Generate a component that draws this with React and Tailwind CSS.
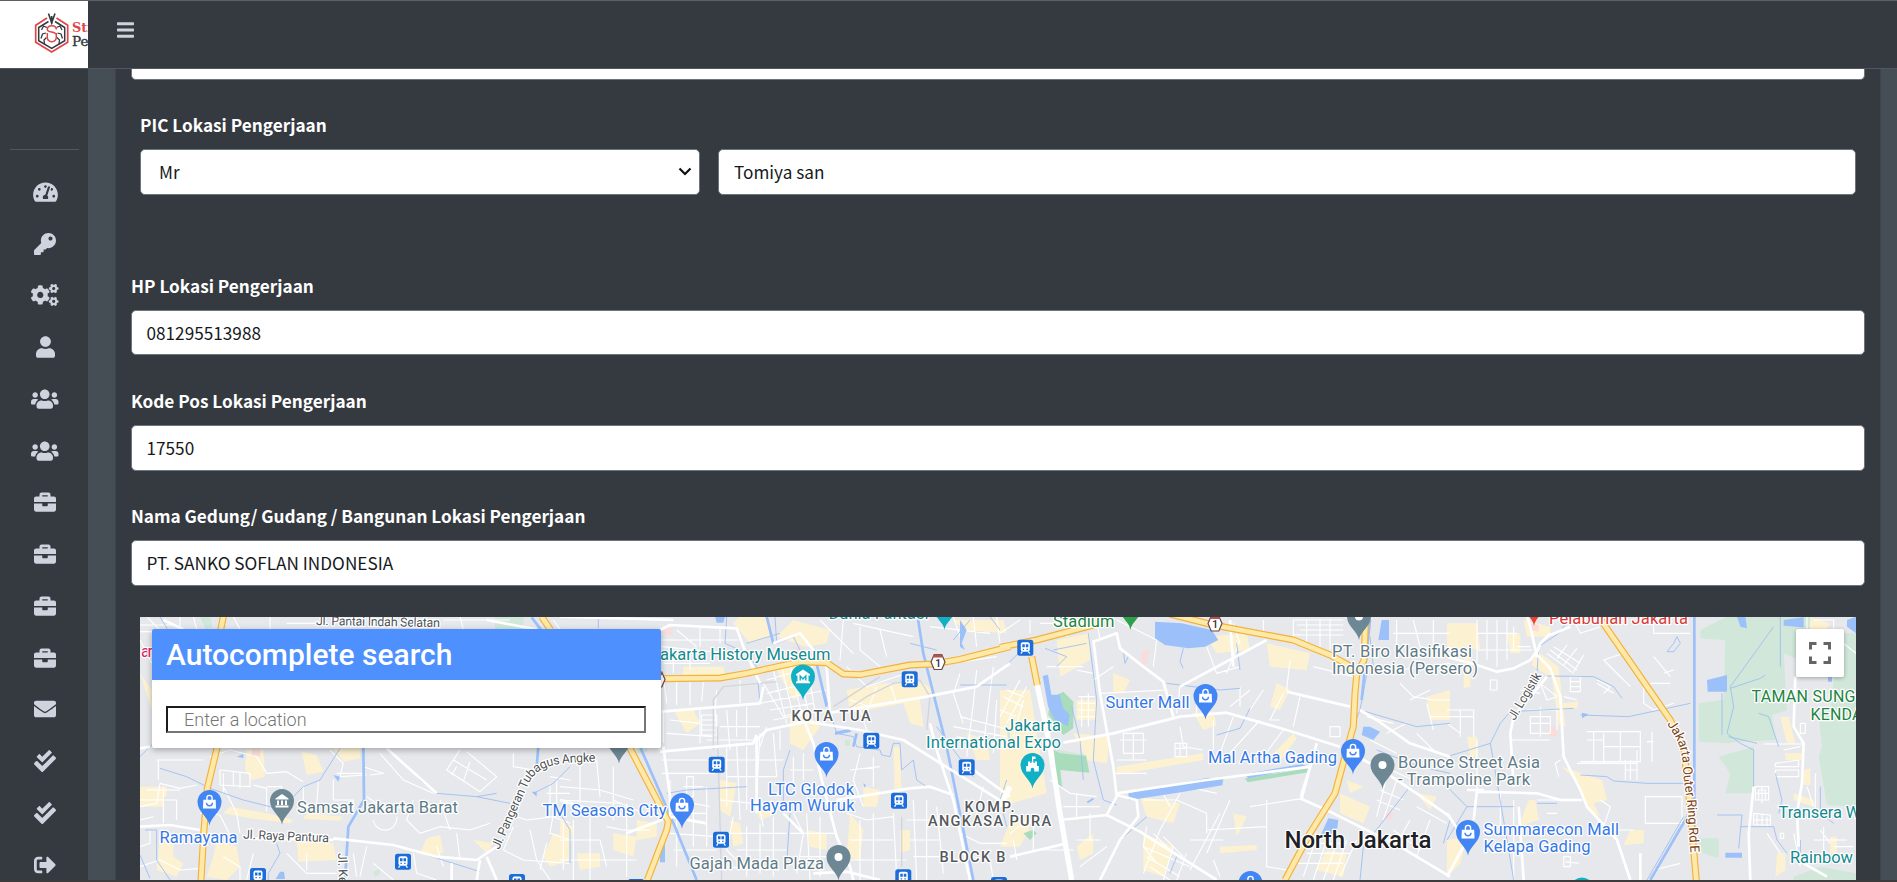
import React from "react";
import {
  FaTachometerAlt, FaKey, FaCogs, FaUser, FaUsers, FaBriefcase,
  FaEnvelope, FaCheckDouble, FaSignOutAlt, FaBars,
} from "react-icons/fa";

const UI = "font-['Noto_Sans_CJK_JP','Noto_Sans_CJK_SC','Noto_Sans',sans-serif]";

const NAV = [
  [FaTachometerAlt, "w-[25px]"], [FaKey, "w-[22px]"], [FaCogs, "w-[27.5px]"], [FaUser, "w-[19px]"],
  [FaUsers, "w-[27.5px]"], [FaUsers, "w-[27.5px]"], [FaBriefcase, "w-[22px]"], [FaBriefcase, "w-[22px]"],
  [FaBriefcase, "w-[22px]"], [FaBriefcase, "w-[22px]"], [FaEnvelope, "w-[22px]"], [FaCheckDouble, "w-[22px]"],
  [FaCheckDouble, "w-[22px]"], [FaSignOutAlt, "w-[22px]"],
];

/* Map geometry. Each tile is drawn at three units per pixel from its own left edge. */
const TILES = [
  {
    ox: 120,
    sand: "M60 560h70v60h-70zM120 700l40 10 0 60 30 20-20 40-60-20zM290 720l60 20 10 60-40 40-60-10 20-60zM380 450h50l5 80-40 10-20-30zM545 455l45 10 20 50-50 10zM530 725l110 5 10 50-115 5zM640 445h80v30l-50 10zM330 620l110 20 80 20-10 10-120-15-80-15zM920 715l40-10 10 50-30 20-40-15zM1060 720l60 10-20 30zM1300 700l50 10v70l-60 20-20-30zM90 560h50v30h-50zM60 220l35 50v60zM560 640l110 10-10 12-110-5z",
    green: "M240 50h30l8 30-20 8zM1125 50h85v40h-85zM760 815l20-8v15l-15 10z",
    pink: "M395 445h25v25h-25z",
    lake: "M350 470l20-8 0 12zM480 815h12l3 22-28 0zM1235 575h15v15zM640 525l20 5-5 15z",
    water: "M120 505L200 530 270 565 370 600 470 625M660 445L600 540 550 560 520 590 480 650M60 470L100 430M75 690L110 690 110 780 150 840M470 730l10 30-35 60 0 20M820 460L900 540 950 580 1070 590 1130 580M1070 590L1170 610M60 765l30 70M920 765L1080 815M1350 500l-50 50-60 30M60 50l60 0 30 50",
    canal: "M730 440L732 600 685 680 675 840M1255 440L1250 500M1235 52l30 40",
    minor: "M60 620l50-10 10-60 60 15 50-10M110 480h140M115 480v60M300 510l90 10v40l-90-5zM310 520v60M340 512v45M360 515v50M60 600h110v60M80 570h100M130 560v110M310 560l40 80 10 60M400 555l40 10v70M440 560h45v60M550 560v60l40-5 5-70M640 540v60h60v60M650 520h80M60 660l40-10M90 690v40l-30 10M270 470l60-20 80 20 30 50 60-5 50 30M240 640l60 5 30 60M630 450l40 40-10 40 80-5M730 500l60 20-40 5M780 460L850 540 940 580M740 590l60 40 60-10M760 660a35 35 0 0 0 70-10M880 600l-20 60 40 40 60-20 90 10 60-20M960 600l30 90M1020 450L980 510 1080 575 1130 530 1040 455M1000 480l100 60M1010 500l-15 25M1050 485l-20 60M1180 460v40l60 10M1290 530l60 10M1280 580h70M1290 550v80M1310 540v90M1160 640l60 20 80-10 50 20M1230 690l20 90 40 60M1180 680l-30 70 60 30 140 10M1300 640l-10 60 60 20M1330 660v150M1280 730l-20 80M60 800l60-20 60 30 60-5M310 770l50 30 0 40M400 760l-20 80M500 760l60 60 90 0M560 760v50M700 760l10 70M740 740l-20 90M760 790l60 50M880 760l10 60 60 20M950 740l20 60M1010 700l10 80M60 120L95 190M80 50l70 70M180 50v38M220 50l10 38M340 50l20 38M450 50v38M500 70h90M970 60h200M1020 50l10 38M1300 60l20 28M60 75h100M60 95h180",
    road: "M60 680L150 675 240 690M640 715L820 735 950 770 1070 780 1130 740M1100 770L1130 840M995 790V840M60 445L90 440M130 60L190 88M800 445L950 580M380 715L640 720M1100 60L1250 88M1070 840L1080 780",
    highway: "M310 50L302 90M292 440L262 565 252 690 243 840M1265 50L1292 90",
  },
  {
    ox: 560,
    sand: "M540 50h80l10 60-60 20-50-60zM700 60l110 30-10 40-60 10-90-30zM860 270l110-20 120 0 30 20-40 30 10 80-40-10-20-60-160 30zM690 350l40-20 50 50-50 70-40-20zM650 210l80-30 30 80-60 40zM1000 440h20l5 150-20 0zM910 560l50 10-10 50-40 0zM340 330h60l20 40-40 30zM370 200h120l10 40-130 0zM480 540l50 10-20 100-30-20zM580 600l60 10 10 30-50 20zM230 660l60 10 0 40-60 10zM160 700l70 10-10 60-60-20zM510 660l30 10 10 60-30 10zM1180 60l150 0 10 40-130-10zM870 640l40 50-10 90-40-10zM1020 690l30 0 0 60-30 10zM1220 400l60 20 10 60-40 0zM740 690l60 10 0 50-50-10zM0 660l40 20-10 60-30 0zM50 760l70 0 0 40-60 10z",
    green: "M232 445l30-5 0 15-30 5zM855 420h15v18h-15zM1340 380l10 20v60z",
    pink: "M305 80l30 5v20l-30-5zM700 140l30 5v30l-30-5z",
    lake: "M465 50h30l-5 18-20 0zM825 395l40-8 10 8-50 10zM300 730l15-3v60l-15 0zM910 550l8 5-5 8zM1200 60l20 30-15 40 10 20-15-10 0-40z",
    water: "M645 50L650 130 700 110 720 150M500 50L495 130 560 160 590 200 600 310M770 200L830 400 880 410 890 440 960 450 965 465 990 470 1000 430 1020 430 1025 510 1060 480 1070 540 1100 560M1130 150l-80-20M115 50v35M320 580L380 570 560 560M690 640L680 790M1130 380L1240 530M1200 255h140M690 450l-20 60 0 120M1340 540l-20 60 20 80M1230 60l-50 60M1290 50l30 40M0 640l30 50 0 100M660 100l-100 30",
    canal: "M1073 50L1090 160 1160 440 1200 640 1240 840M620 50l20 80M770 190L800 320M240 440L345 680 410 840M890 400l-10 40",
    minor: "M305 120h230M305 140l200 20M350 90l60 50M420 80v60M480 80v50M310 340v90M420 330v100M470 270l-5 60 10 120M330 360l90 10M425 345h45v60h-45zM425 360h45M425 375h45M425 390h45M500 330l10 120M530 330v80M560 320v100M480 380h120M440 420h160M610 250l60 100 60-20M620 280l120-30M600 310l200-40M640 210l40 160M665 200l40 170M690 195l40 170M715 190l35 170M740 190l30 170M620 240l140-40M630 330l130-20M640 360l160-30M305 520h160M305 480h150M330 540v120M380 530h20v60h-20zM370 560h60M350 600l100 20M400 620v120M440 560v180M500 440v180M530 430l10 230M560 440v190M600 400l-10 180 20 100M640 400l10 130M490 480h180M500 530h150M480 600l100 10M520 650l-20 100 60 60M500 700h180M530 750h150M560 680v150M600 670v150M640 650v180M700 640l30 60-20 120M480 800l180 10M690 700h140M740 640l10 200M780 650v180M720 770h110M860 200l60 60 120-40M950 260l-30 80M990 250l20 60M900 330l20 60M870 300l60 20 50-10M900 80v70l60 50M960 90l20 80M850 60l-10 120M780 60l100 100M880 70l180 40M1110 80l180 20M1180 50l20 60M1240 50l10 90M1310 50l10 80M1110 200l200-30M1200 220l-20 60 30 90M1250 210l-10 100M1300 200l-30 240M1180 380l160 30M1200 350l150 40M1190 410l150 30M1240 310l-20 160M1310 300l-10 160M900 460l-20 80 30 80M940 470v90M870 510l90-10M860 640l60 20 80-10M900 660v180M940 640v190M870 720h130M860 780h180M1000 640l10 190M1060 600l10 240M1100 600v240M1040 660h140M1050 720h90M1060 770h100M1130 620l20 200M0 560l120 10 100 30M60 470v140M110 480l10 110M160 500v160M0 600l180 10M0 720h120l20 80M160 600l90 40M40 660v180M90 650v190M140 680l50 10 80 0M0 780h230M200 610v220M1200 700l60 30 80 0M1270 560l-20 80M1290 780l10 60M1200 760l80 20M320 400l140 10M310 640h130M350 660v140M330 700l140 10M340 750h130M310 230l10 80M350 245v70M390 245v70M430 245l-5 60M540 240v70M310 190h140M340 160v60M390 150v60M620 380l-20 60M660 390v60M600 480h70M700 470v90M730 460v80M690 510h70",
    gray: "M460 450V300L490 260 650 245M860 330L920 290 1000 250 1080 240M820 320L960 230M1080 240L1110 290 1100 390M472 380L485 840M1025 650V800",
    road: "M300 90L330 75 530 85 550 140 600 250M305 335L600 310 610 260M590 420L620 390 740 365 900 390 1030 420 1350 620M300 455L580 430 590 405M310 440L330 590 330 660M720 330L760 430 790 560 830 710 870 800 880 840M800 340L1100 290 1250 260 1350 190M1110 370L1130 450 1180 600 1230 840M830 600L1050 565 1110 560 1180 585M0 50L340 60M640 130l80-30 80 100 10 140M440 670L330 650 200 700M760 820L860 815 960 840M1200 480L1350 590M590 420V640M0 600L130 640M670 640l60 60",
    highway: "M300 236L480 234 560 220 720 185 800 188 850 222 900 224 1050 195 1120 192 1200 178 1350 140M210 445L325 665 320 690 262 840",
  },
  {
    ox: 1000,
    sand: "M0 270l90 0 50 310-140 40zM170 120l100-20 0 80-90 50zM620 110l120-10 10 50-100 10zM800 130l130 30-10 50-110-10zM220 400l110 10-10 80-60-10zM350 500l260-40 0 20-260 45zM830 250l40 20-30 60-30-10zM880 400l-80 80 40 5 50-70zM420 590l120 20-20 60-80-20zM1020 580l90 40-20 50-70-30zM1280 290l70-20v90l-60 0zM980 750l60 10-10 70-80-20zM430 700l90 40-30 90-60-20zM660 740l110-5v15l-110 10zM580 340l60-5 10 40-40 15zM700 640l40 10-30 60zM1250 580l60 10-20 40zM230 300h60v60h-60zM40 640l60 20-40 80-60 0zM340 220l50 20-20 40-30 0zM230 740l50-40 0 60-40 20zM1040 540l50 20-40 20z",
    green: "M170 450l8 0 80 15 10 50-85-10 5 60-18-20z",
    park: "M150 295l40-20 30 30 0 80-30 20-45-60zM162 450l18 10 78 8 10 50-88-8 6 55-18-20zM735 535l190-30-2 12-180 30zM70 700l30-10 10 10-20 20z",
    pink: "M425 155l25-8-8 40-18 15zM1150 640l30 0 0 15-25 5z",
    lake: "M465 65l80 5 90 20 20 30-40 20-50 5-70-10-30-20zM128 228l16-4 10 60 25 0 10 40 20 20-5 35-40-20-20-40zM385 580l160-32 80-15 45 5-3 18-120 20-160 25zM735 522l170-30 20 8-180 35zM1145 60h22v60h-32zM985 655l30 5-5 40-50 10zM1090 380l20 0 30 15-20 25-35-15zM260 605l20-12 2 5-18 12z",
    water: "M265 100L290 300 280 480 310 600 350 615M215 320L240 420 250 540M135 145L200 170 170 200M550 145l-10 40 10 20M1080 330L1250 380 1350 370M1100 225L1080 330 1040 430M500 250l160 20 60-5M650 405l70-20 30-60M370 150l15 20-10 20zM360 720L440 650M530 770l-20 50M1230 560L1090 740 1080 840M1130 450L1260 500 1350 520M1110 110L1120 200M1350 660l-20 70M710 130l10 80M0 215l70-70M160 150l100-20",
    canal: "M1110 60L1085 300",
    minor: "M140 200h110M280 240l60-40M300 280l200-10M350 60l120 60M470 120l-10 80M620 140l30 80 70-20M720 120l-40 100M700 70l20 60M790 60v50M880 60v60M900 130l60 20M960 60v80M880 60h150M890 75h140M900 90h130M880 105h150M920 60v70M990 60v90M870 180l-10 90M940 200l120 30M540 260l-10 80M590 270v80M750 270l-60 50M790 270l-40 60M850 280l-40 80 30 0M900 290l-20 90M720 260v60M540 380l10 60 60 10M640 360v90M700 350l-40 110M780 360l-100 110M850 390l-60 80M525 430h35v40h-35zM525 445h35M540 430v40M370 400h60v60h-60zM360 420h80M400 400v80M350 480h90M340 520h100M950 430l-50 160M750 620l160-25M660 640l-90 170M800 600v200l60 10M560 560l90 20M480 560l30 60M430 600l100 0 90 40M540 580l-60 110M620 690l180-10M570 720l100 0M620 640v60M690 600l-70 160M230 580v80M150 540l60 40 80 10M190 620h110M230 720h70M270 640v80M30 700l40-30 80 0M40 720l10 60M100 660v90M130 750h90M240 800l80-60M440 680l-10 60 40 50M460 700l60 60M490 710l60 60M430 740l140 60M520 740l-30 100M560 760l-30 80M640 780l20 50M900 730h140M920 760h130M890 790h140M950 710l-40 120M980 720l-40 120M1010 730l-40 110M1040 720l-40 120M1070 720l-50 110M1110 420l80 40M1150 500l90 40M1160 530l-30 120M1190 540l-40 120M1140 570l70 30M1130 600l70 30M1230 300l60-30M1280 310l20 80M1300 300h50M1290 350h60M1160 400l60-30M1100 350l80 20M1240 60l20 80 90 20M1190 60v80M1300 60v90M1180 100h170M1200 210l150-20M1250 400l60 60M1200 250l40 40 60 10M0 350l60-110M20 370l60-110M10 290l60 30M20 270l50 20M0 330l50 20M40 410l30-110M0 100l60-40M90 60v40M120 70h160M200 60v50M290 60l10 60M230 210l50 10M235 310h50M235 330h50M235 350h50M235 290h50M245 290v90M265 280v100M990 380h30v30h-30zM1250 620l90 50M1180 690l80 60M1230 660l-50 90M1290 660l-40 110M440 770l100 60M450 800l60 40M480 690l-50 130",
    road: "M280 120L300 280 340 500 350 590M280 125L350 100 360 145 430 200 490 245 520 350M190 428L340 400 540 350 680 338 860 390 1020 440M350 580L620 540 930 500M350 590L320 645 180 660M320 645L420 695 650 840M30 770L200 730M350 585L410 600 415 650 360 720 300 840M900 595L1000 640 1200 740 1350 830M905 595L950 430M1070 470L1130 500 1250 580 1350 650M1080 330L1130 360 1230 430M540 260L800 120M860 275L1050 320M700 200L690 60M1230 430l120 40",
    artery: "M110 250L130 340 150 440 180 640 215 840M0 620L30 560",
    highway: "M0 142L110 120 280 75M95 170L112 255M510 42L640 75 880 120 990 165 1045 195 1070 225 1065 280 1060 380 1035 470 1005 580 930 700 855 840M1070 225L1092 180 1097 50",
  },
  {
    ox: 1447,
    sand: "M0 70h90l10 80-50-10-50 10zM50 160h20v100l-20 5zM230 60l80 20 0 30-70 0zM265 150l70 50 20 180-20-5-20-140-60-40zM345 310l50-5-5 20-45 5zM345 500l120 40 15 60-40 10 20 40-40-20-25-80zM245 600l20 0 10 60-60 20zM550 690l40 0 0 40-60 5zM0 720l60-10-20 80-40 40zM1080 50l70 20-20 30-50-10zM1000 350h25l20 80-25 0zM1015 460h50v20h-50zM1070 510l20-5 0 50-20 0zM1040 580l60 20 0 20-60-20zM990 760l25 0 0 50-30 20zM1150 710l20 0 0 50-20 0zM180 100l40 0 0 60-30 0zM60 410l30 0 0 60-20 0z",
    green: "M760 90L840 50 1090 50 1080 190 1010 160 1020 330 975 345 985 420 870 425 845 430 755 425 755 310 830 300 835 120 760 115zM815 470L920 440 920 580 835 580 850 520zM1130 330L1227 320V620L1140 615 1115 470 1125 440 1115 350zM755 715h60l0 60-60-20zM1040 830l80-30 107 20v20h-187zM1180 100l47 0v240h-80z",
    pink: "M305 380h25v30h-25zM250 70l25 5v20l-25-5z",
    lake: "M780 240l60-15v50l-58 0zM870 50h25l5 35-20-5zM1010 60l60-8v30l-60-5zM835 758h50v15h-50zM405 338l20 5-20 12zM1143 230h12v15h-12zM1200 60l27-10v50l-27-20z",
    water: "M0 470L130 430 160 370 190 335 380 325M270 220l5-80 60-40 30-40M300 228L440 230 500 260 525 295M400 345L545 350 730 310M400 525L480 530 500 543 600 550 740 550M0 560L60 620 200 620M130 430L180 720 200 840M270 610h60M690 110l10 20-20 25-20 0 20-25zM980 80L850 260 860 320 840 400 880 430 920 450 920 580M850 265l90-30 15-10M825 280V405M935 340l30 10 30 90M845 410L930 430M1000 50v150M810 645h75l-10 100M880 680h100l10 40 30 40M985 520l20 80-10 40M1120 560v80l40 30M1060 720l0 40 40 30M60 620L0 720M710 650L600 840",
    canal: "M742 50V770M735 625L610 840",
    minor: "M90 60v130M120 60v120M150 60v140M180 60v120M90 100h120M90 150h120M200 80v70M210 140h40M205 150h50M130 240h20v30h-20zM280 250l50 40-30 10zM240 330h90v60M250 350h60v50h-60zM280 320v90M250 370h60M220 270l60 10M300 160l80 60M310 150l80 60M320 140l80 50M330 175l30-40M350 195l40-50M380 215l30-50M370 230h30v45h-30zM370 245h30M370 260h30M450 240l40 20-20 20M450 250l50 30M350 290l40 10M380 60l20 40 60-20M530 160l-60 20 80 80M420 395h160v90h-180M440 395v90M470 400v90M520 395v90M580 395v90M470 440h110M420 420h50M535 480v60M550 480v60M535 510h35M570 450v90M615 395v90M600 425h20M390 490l30 0 150 0M620 170l50 60M650 220l30-10M590 250v60l30 20 60-20M610 250h60M620 60v40h110M595 590h110v80h-110zM200 600v240M160 580l0 100M270 600h100M300 640l30 0M350 770h20v30h-20zM355 785l40 5M0 330h80v80M0 350h80M40 330v80M0 370l40 30M90 420v160M60 480l60 20M190 420h120M340 480l-15 10 10 40M460 600l30 20-20 60M500 690l60 0M620 810l80-20M1060 370h15v30h-15zM1010 450l50-10M950 432h120M985 490l70-10v20l-70 0zM985 510l70 0v20h-70zM925 560h40v40h-40zM935 570h20v30h-20zM945 560v50M925 580h40M920 640l50 5v30h-50zM930 645v30M945 645v30M960 650v30M920 660h50M1080 560l20 60M1105 520v130M1000 700h10v15h-10zM1120 690l30 40M1100 720h100M1130 680v80M1160 740h60M1040 700l20 100M960 700l40 60M1130 100l40 0M1100 60h60v30M1190 130l37 30M1080 50v40",
    road: "M0 170L90 195 150 215 200 205 250 180 265 160 310 205 340 290 350 470 400 570 420 620 510 720 550 840M310 100L280 130 265 170M370 80l-60 25M270 170L250 80 240 50M300 230L200 350 190 400 200 560M90 575L270 580 340 600 405 600M90 570L80 660M0 640L40 700M60 720L0 830M1045 230L1040 380 1070 430 1065 550 1050 640 1055 740M920 560L905 700 910 840M580 760V840M1070 790L1140 830M215 620L230 840M60 570h50",
    highway: "M455 50L670 360 710 440 725 580 740 750 748 840",
  },
];

const LAYERS = [
  ["sand", { fill: "#fcf2d2" }],
  ["green", { fill: "#d0e7da" }],
  ["park", { fill: "#a9dcba" }],
  ["pink", { fill: "#fadcdc" }],
  ["minor", { fill: "none", stroke: "#fff", strokeWidth: 3.4, strokeLinejoin: "round" }],
  ["gray", { fill: "none", stroke: "#d3d5da", strokeWidth: 4 }],
  ["lake", { fill: "#9cc0f9" }],
  ["water", { fill: "none", stroke: "#9dbdf2", strokeWidth: 2.6, strokeLinejoin: "round" }],
  ["canal", { fill: "none", stroke: "#9cc0f9", strokeWidth: 8, strokeLinejoin: "round" }],
  ["road", { fill: "none", stroke: "#fff", strokeWidth: 8, strokeLinejoin: "round" }],
  ["artery", { fill: "none", stroke: "#fff", strokeWidth: 16, strokeLinejoin: "round" }],
  ["highway", { fill: "none", stroke: "#f3b23c", strokeWidth: 21, strokeLinejoin: "round" }],
  ["highway", { fill: "none", stroke: "#ffe9a8", strokeWidth: 14, strokeLinejoin: "round" }],
];

const BLUE = "#3578e5", GREY = "#5f7b87", TEAL = "#148a8f", DARK = "#55585c", GREEN = "#1c8540";

/* text, x, baseline, width, colour, size, weight */
const LABELS = [
  ["ar", 141, 657, 12, "#d8275f", 16, 400],
  ["Samsat Jakarta Barat", 297, 812.5, 161, GREY, 16.5, 400],
  ["Ramayana", 159.5, 842.5, 78, BLUE, 16.5, 400],
  ["TM Seasons City", 542.5, 816, 124, BLUE, 16.5, 400],
  ["akarta History Museum", 660, 660, 170.5, TEAL, 16.5, 400],
  ["Dunia Fantasi", 828.5, 619, 100, TEAL, 16.5, 400],
  ["KOTA TUA", 791.5, 720.5, 79, DARK, 14.5, 500],
  ["Jakarta", 1005, 731, 56, TEAL, 16.5, 400],
  ["International Expo", 926, 748, 135, TEAL, 16.5, 400],
  ["LTC Glodok", 768, 794.5, 86, BLUE, 16.5, 400],
  ["Hayam Wuruk", 750, 811, 104.5, BLUE, 16.5, 400],
  ["KOMP.", 964.5, 811.5, 50, DARK, 14.5, 500],
  ["ANGKASA PURA", 928, 826, 123, DARK, 14.5, 500],
  ["BLOCK B", 939.5, 862, 66, DARK, 14.5, 500],
  ["Gajah Mada Plaza", 689.5, 869, 134.5, GREY, 16.5, 400],
  ["Stadium", 1053, 627, 61.5, GREEN, 16.5, 400],
  ["Sunter Mall", 1105.5, 708, 84, BLUE, 16.5, 400],
  ["Mal Artha Gading", 1208, 763, 129, BLUE, 16.5, 400],
  ["PT. Biro Klasifikasi", 1332, 657, 140, GREY, 16.5, 400],
  ["Indonesia (Persero)", 1332, 674, 146, GREY, 16.5, 400],
  ["Bounce Street Asia", 1398, 768, 142, GREY, 16.5, 400],
  ["- Trampoline Park", 1398, 785, 132, GREY, 16.5, 400],
  ["North Jakarta", 1284.5, 848, 147, "#202124", 24, 500],
  ["Pelabuhan Jakarta", 1549, 623.5, 139, "#d93a3a", 16.5, 400],
  ["TAMAN SUNG", 1751.5, 702, 104, GREEN, 16, 400],
  ["KENDA", 1810.5, 719.5, 52, GREEN, 16, 400],
  ["Transera W", 1778.5, 818, 82, TEAL, 16.5, 400],
  ["Rainbow", 1790, 863, 63, TEAL, 16.5, 400],
  ["Summarecon Mall", 1483.5, 835, 135.5, BLUE, 16.5, 400],
  ["Kelapa Gading", 1483.5, 852, 107, BLUE, 16.5, 400],
];

/* circle centre x, y, colour, glyph */
const PINS = [
  [209.5, 802, "#4286f5", "bag"], [282, 801, "#6d8894", "bank"], [619, 740, "#6d8894", "dot"],
  [682, 805, "#4286f5", "bag"], [803, 676.5, "#12b0c4", "museum"], [826.5, 754, "#4286f5", "bag"],
  [838.5, 857, "#6d8894", "dot"], [1032.5, 765, "#12b0c4", "castle"], [1205.5, 696, "#4286f5", "bag"],
  [1353, 751, "#4286f5", "bag"], [1359, 616.5, "#6d8894", "dot"], [1382.5, 765, "#6d8894", "dot"],
  [1468, 832, "#4286f5", "bag"], [1250.5, 883, "#4286f5", "bag"], [944.5, 606.5, "#12b0c4", "dot"],
  [1130.5, 606.5, "#2da04c", "dot"], [1534, 602.5, "#ea4335", "dot"], [1582, 889.5, "#12b0c4", "dot"],
];

const STATIONS = [
  [403, 861.7], [258, 876], [517, 882], [716.7, 764.7], [721, 839.7], [871.3, 740.7], [909.7, 679.3],
  [966.7, 767.3], [899, 800.7], [903.3, 877.3], [999, 885], [636, 887], [1025.3, 647.7],
];

function Glyph({ kind }) {
  if (kind === "bag")
    return (
      <>
        <path d="M-6.2-2.2h12.4l.3 8.700h-13z" fill="#fff" />
        <path d="M-2.6-2v-2a2.600 2.600 0 0 1 5.200 0V-2" fill="none" stroke="#fff" strokeWidth="1.4" />
        <path d="M-3 .8a3 3 0 0 0 6 0" fill="none" stroke="#4286f5" strokeWidth="1.4" />
      </>
    );
  if (kind === "bank")
    return <path d="M-6.500-2.500L0-7l6.500 4.500v1h-13zM-5-0.500h2v4.500h-2zM-1-0.500h2v4.500h-2zM3-0.500h2v4.500h-2zM-6.500 4.500h13v2h-13z" fill="#fff" />;
  if (kind === "museum")
    return (
      <>
        <path d="M-7-2.300L0-7 7-2.300v1.300h-14zM-5.500-1.500h11V5h-11zM-7 5h14v1.800h-14z" fill="#fff" />
        <path d="M-2.800 4V-0.500L0 2.500 2.800-0.500V4" fill="none" stroke="#12b0c4" strokeWidth="1.400" />
      </>
    );
  if (kind === "castle")
    return (
      <>
        <path d="M-4.500-3.500h2.200v1.500h1.300v-1.500h2v1.500h1.300v-1.500h2.200v4.500h1.800v5.500h-4.500V4.500a1.800 1.800 0 0 0-3.600 0v2h-4.500V1h1.800z" fill="#fff" />
        <path d="M-.5-3.500V-8.500H3v2.500H.8v2.500z" fill="#fff" />
      </>
    );
  return <circle r="4" fill="#fff" />;
}

function Shield({ x, y }) {
  return (
    <g transform={`translate(${x} ${y})`}>
      <path d="M-3.800-7.500h7.600L7 0 3.800 7.500h-7.600L-7 0z" fill="#fff" stroke="#6b4a48" strokeWidth="1.200" />
      <path d="M-3.800-7.500h7.600l1.200 3h-10z" fill="#b5544d" />
      <text y="4.500" textAnchor="middle" fontSize="11" fontWeight="500" fill="#333">1</text>
    </g>
  );
}

function CityMap() {
  const halo = { paintOrder: "stroke", stroke: "#fff", strokeWidth: 2.6, strokeLinejoin: "round" };
  return (
    <svg viewBox="140 617 1716 263" className="block h-[263px] w-[1716px] font-['Roboto',sans-serif]">
      <rect x="140" y="617" width="1716" height="263" fill="#e6e8ec" />
      {LAYERS.map(([key, style], i) =>
        TILES.filter((t) => t[key]).map((t) => (
          <path key={`${i}-${t.ox}`} d={t[key]} transform={`translate(${t.ox} 600) scale(0.33333)`} {...style} />
        ))
      )}
      <Shield x={938} y={662} />
      <Shield x={1215} y={623.500} />
      <Shield x={658} y={679.500} />
      {STATIONS.map(([x, y]) => (
        <g key={`${x}-${y}`} transform={`translate(${x} ${y})`}>
          <rect x="-8" y="-8" width="16" height="16" rx="2.500" fill="#1a6ddb" />
          <rect x="-4.500" y="-5.500" width="9" height="9.500" rx="2" fill="#fff" />
          <path d="M-3-3.500h2.500v3H-3zM.5-3.500H3v3H.5z" fill="#1a6ddb" />
          <path d="M-2.500 1h1.300v1.300h-1.300zM1.200 1h1.300v1.300H1.200z" fill="#1a6ddb" />
          <path d="M-3 4l-1.500 2M3 4l1.500 2" stroke="#fff" strokeWidth="1.200" />
        </g>
      ))}
      {PINS.map(([x, y, c, k]) => (
        <g key={`${x}-${y}`} transform={`translate(${x} ${y})`}>
          <path d="M0 23.500C-1 15-12 10-12 0a12 12 0 0 1 24 0C12 10 1 15 0 23.500z" fill={c} />
          <Glyph kind={k} />
        </g>
      ))}
      {LABELS.map(([s, x, y, w, c, size, weight]) => (
        <text key={s + x} x={x} y={y} textLength={w} fontSize={size} fontWeight={weight} fill={c} {...halo}>{s}</text>
      ))}
      <defs>
        <path id="angke" d="M499 850L528 785Q535 769 554 765T608 762" />
        <path id="ring" d="M1667 724Q1682 744 1683 765T1687 800L1691 860" />
      </defs>
      <g fill="#505357" fontSize="12.500" {...halo}>
        <text x="316" y="626" textLength="124" transform="rotate(1 378 625)">Jl. Pantai Indah Selatan</text>
        <text x="243" y="838.500" textLength="86" transform="rotate(2.500 243 838)">Jl. Raya Pantura</text>
        <text x="0" y="0" transform="translate(338 853) rotate(88)">Jl. Ke</text>
        <text x="0" y="0" textLength="53" transform="translate(1514.500 721) rotate(-59)">Jl. Logistik</text>
        <text><textPath href="#angke" textLength="147">Jl. Pangeran Tubagus Angke</textPath></text>
        <text fill="#7d3f13" fontSize="13"><textPath href="#ring" textLength="133">Jakarta Outer Ring Rd E</textPath></text>
      </g>
    </svg>
  );
}

function Logo() {
  return (
    <svg viewBox="0 0 88 67" className="h-[67px] w-[88px] shrink-0">
      <g fill="none" strokeLinejoin="miter">
        <path d="M47 17L35.700 24.300v17L51.700 51l16-9.700v-17L56.500 17" stroke="#e0454a" strokeWidth="1.700" />
        <path d="M48.500 20.500L38.700 26.500v13.200L51.700 47.300l13-7.600V26.500L55 20.500" stroke="#343a40" strokeWidth="1.500" />
        <path d="M48.500 12.500l3.200 9.500 3.300-9.500M51.700 15v8" stroke="#343a40" strokeWidth="1.600" />
        <path d="M47 26.500l-3.500-1.500-2 4M56.500 26.500l3.500-1.500 2 4M46 32l-3.500 1-1.500 4.500M57.500 32l3.500 1 1.500 4.500M46.500 36.500l-2.500 2.500.5 4M57 36.500l2.500 2.500-.5 4" stroke="#343a40" strokeWidth="1.300" />
        <path d="M56.300 28.500c0-5-9-5-9 0 0 3.500 9 1.500 9 5.500M47.300 32v4.500c.5 5.500 8.500 5.500 9 0v-4.500" stroke="#e0454a" strokeWidth="1.500" />
      </g>
      <text x="72" y="31" fontFamily="DejaVu Serif, serif" fontWeight="700" fontSize="13" textLength="22" lengthAdjust="spacingAndGlyphs" fill="#e0454a">Str</text>
      <text x="72" y="44.500" fontFamily="DejaVu Serif, serif" fontSize="13.500" fill="#343a40" stroke="#343a40" strokeWidth=".4">Pe</text>
    </svg>
  );
}

const Label = ({ children, className = "" }) => (
  <div className={`flex h-7 items-center pb-[2px] text-[17.2px] leading-none font-bold whitespace-nowrap text-white ${className}`}>{children}</div>
);

const Field = ({ children, className = "" }) => (
  <div className={`flex items-center rounded-[5px] border border-[#6c757d] bg-white text-[17.2px] leading-none whitespace-nowrap text-[#16191c] ${className}`}>
    <span>{children}</span>
  </div>
);

export default function App() {
  return (
    <div className={`flex h-[882px] w-[1897px] flex-col overflow-hidden bg-[#454d55] ${UI}`}>
      <header className="flex h-[69px] shrink-0 border-t border-b border-t-[#5b6067] border-b-[#50575e] bg-[#353940]">
        <div className="w-[88px] shrink-0 overflow-hidden bg-white"><Logo /></div>
        <div className="flex items-center pb-[9px] pl-[29px] text-[#cfd2d9]">
          <FaBars className="h-[20px] w-[17px]" preserveAspectRatio="none" />
        </div>
      </header>

      <div className="flex min-h-0 flex-1">
        <aside className="flex w-[88px] shrink-0 flex-col overflow-hidden bg-[#353940] pt-[80px]">
          <div className="mx-[9.500px] h-px shrink-0 bg-[#50575e]" />
          <nav className="mt-[16px] flex flex-col text-[#cfd3de]">
            {NAV.map(([Icon, w], i) => (
              <div key={i} className="flex h-[51.750px] shrink-0 items-center justify-center pl-[2px]">
                <Icon className={`h-[22px] ${w}`} />
              </div>
            ))}
          </nav>
        </aside>

        <main className="flex min-w-0 flex-1 overflow-hidden pr-[17px] pl-[28px]">
          <section className="w-[1764px] shrink-0 bg-[#353940] px-[15px] shadow-[0_0_2px_rgba(0,0,0,0.3)]">
            <div className="h-[11px] w-[1734px] rounded-b-[5px] border border-t-0 border-[#6c757d] bg-white" />

            <div className="px-[9px]">
              <Label className="mt-[32px]">PIC Lokasi Pengerjaan</Label>
              <div className="mt-[9px] flex gap-[18px]">
                <Field className="h-[46px] w-[560px] pl-[18px]">
                  <span className="flex w-[533px] items-center justify-between">
                    Mr
                    <svg viewBox="0 0 14 9" className="h-[9px] w-[14px]">
                      <path d="M1.500 1.500L7 7l5.500-5.500" fill="none" stroke="#111" strokeWidth="2.200" />
                    </svg>
                  </span>
                </Field>
                <Field className="h-[46px] flex-1 pl-[15px]">Tomiya san</Field>
              </div>
            </div>

            <Label className="mt-[78px]">HP Lokasi Pengerjaan</Label>
            <Field className="mt-[9px] h-[45px] pl-[14.500px]">081295513988</Field>

            <Label className="mt-[33px]">Kode Pos Lokasi Pengerjaan</Label>
            <Field className="mt-[9px] h-[46px] pl-[14.500px]">17550</Field>

            <Label className="mt-[32px] tracking-[-0.02px]">Nama Gedung/ Gudang / Bangunan Lokasi Pengerjaan</Label>
            <Field className="mt-[9px] h-[46px] pl-[14.500px]">PT. SANKO SOFLAN INDONESIA</Field>

            <div className="relative mx-[9px] mt-[31px] h-[263px] overflow-hidden font-['Roboto',sans-serif]">
              <CityMap />
              <div className="absolute top-[12px] left-[12px] h-[119px] w-[509px] overflow-hidden rounded-[2px] bg-white shadow-[0_2px_6px_rgba(0,0,0,0.3)]">
                <div className="flex h-[51px] items-center bg-[#4d90fe] pl-[14px] text-[30px] leading-none font-medium whitespace-nowrap text-white">
                  Autocomplete search
                </div>
                <div className="mt-[26px] ml-[14px] flex h-[27px] w-[480px] items-center border-2 border-t-[#1c1c1c] border-r-[#767676] border-b-[#767676] border-l-[#1c1c1c] bg-white pl-[16px] text-[18px] leading-none font-light text-[#757575]">
                  Enter a location
                </div>
              </div>
              <div className="absolute top-[12px] right-[12px] flex h-[48px] w-[48px] items-center justify-center rounded-[2px] bg-white shadow-[0_1px_4px_rgba(0,0,0,0.3)]">
                <svg viewBox="0 0 22 22" className="h-[22px] w-[22px]">
                  <path d="M1.500 7.500v-6h6M14.500 1.500h6v6M20.500 14.500v6h-6M7.500 20.500h-6v-6" fill="none" stroke="#666" strokeWidth="3" />
                </svg>
              </div>
            </div>
          </section>
        </main>
      </div>

      <div className="h-[2px] shrink-0 bg-[#3c3a3b]" />
    </div>
  );
}
